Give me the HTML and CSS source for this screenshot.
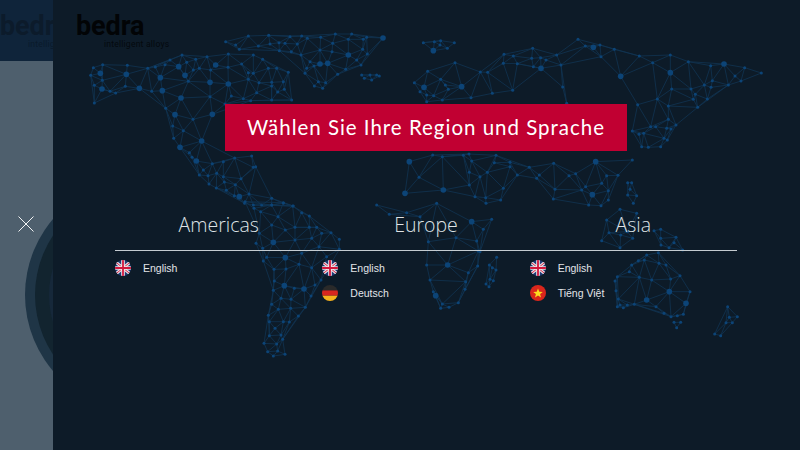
FILE: index.html
```html
<!DOCTYPE html>
<html lang="de">
<head>
<meta charset="utf-8">
<title>bedra</title>
<link rel="stylesheet" href="styles.css">
</head>
<body>
<div class="page">
  <aside class="side">
    <div class="side-top">
      <div class="logo logo-ghost"><span class="logo-name">bedra</span><span class="logo-tag">intelligent alloys</span></div>
    </div>
    <div class="side-body">
      <svg class="side-rings" width="53" height="389" viewBox="0 0 53 389">
        <circle cx="142" cy="234" r="117" fill="#1f3546"/>
        <circle cx="142" cy="234" r="107" fill="#12242f"/>
        <circle cx="142" cy="234" r="93" fill="#16283a"/>
      </svg>
      <button class="close" aria-label="Schließen">
        <svg width="16" height="16" viewBox="0 0 16 16"><path d="M.5.5l15 15M15.5.5l-15 15" stroke="#f2f4f5" stroke-width="1" fill="none"/></svg>
      </button>
    </div>
  </aside>
  <main class="main">
    <svg id="worldmap" class="worldmap" width="747" height="450" viewBox="53 0 747 450"></svg>
    <div class="logo"><span class="logo-name">bedra</span><span class="logo-tag">intelligent alloys</span></div>
    <h1 class="banner">Wählen Sie Ihre Region und Sprache</h1>
    <section class="regions">
      <div class="region-heads">
        <h2 class="region-head">Americas</h2>
        <h2 class="region-head">Europe</h2>
        <h2 class="region-head">Asia</h2>
      </div>
      <div class="region-lists">
        <ul class="langs">
          <li class="lang"><svg class="flag" viewBox="0 0 16 16"><use href="#uk"/></svg>English</li>
        </ul>
        <ul class="langs">
          <li class="lang"><svg class="flag" viewBox="0 0 16 16"><use href="#uk"/></svg>English</li>
          <li class="lang"><svg class="flag" viewBox="0 0 16 16"><use href="#de"/></svg>Deutsch</li>
        </ul>
        <ul class="langs">
          <li class="lang"><svg class="flag" viewBox="0 0 16 16"><use href="#uk"/></svg>English</li>
          <li class="lang"><svg class="flag" viewBox="0 0 16 16"><use href="#vn"/></svg>Tiếng Việt</li>
        </ul>
      </div>
    </section>
  </main>
</div>
<svg class="defs" width="0" height="0">
  <defs>
    <clipPath id="round"><circle cx="8" cy="8" r="8"/></clipPath>
    <g id="uk" clip-path="url(#round)">
      <rect width="16" height="16" fill="#1d3a75"/>
      <path d="M0 1.5L16 14.5M16 1.5L0 14.5" stroke="#e8dde2" stroke-width="3"/>
      <path d="M0 1.5L16 14.5M16 1.5L0 14.5" stroke="#d8304f" stroke-width="1"/>
      <path d="M8 0V16M0 8H16" stroke="#f0e8ea" stroke-width="3.600"/>
      <path d="M8 0V16M0 8H16" stroke="#d3163c" stroke-width="1.800"/>
    </g>
    <g id="de" clip-path="url(#round)">
      <rect width="16" height="5.4" fill="#2a2a2a"/>
      <rect y="5.4" width="16" height="5.3" fill="#d8261f"/>
      <rect y="10.7" width="16" height="5.3" fill="#f5b21c"/>
    </g>
    <g id="vn" clip-path="url(#round)">
      <rect width="16" height="16" fill="#d9261c"/>
      <path d="M8 3.4l1.3 3.3 3.5.2-2.7 2.2.9 3.4L8 10.600l-3 1.900.9-3.400-2.700-2.200 3.500-.2z" fill="#fcdc1f"/>
    </g>
  </defs>
</svg>
<script src="map.js"></script>
</body>
</html>
```
FILE: styles.css
```css
* { box-sizing: border-box; }
html, body { margin: 0; height: 100%; }
body { background: #0d1b28; overflow: hidden; font-family: "Liberation Sans", Arial, sans-serif; }
.page { display: flex; width: 800px; height: 450px; }
.side { width: 53px; flex: none; display: flex; flex-direction: column; overflow: hidden; }
.side-top { height: 61px; flex: none; background: #0f243a; padding: 14px 0 0 0; overflow: hidden; }
.side-body { position: relative; flex: 1; background: #4e5f6d; }
.side-rings { position: absolute; left: 0; top: 0; }
.close { position: absolute; left: 18px; top: 155px; width: 16px; height: 16px; padding: 0; border: 0; background: none; display: block; }
.close svg { display: block; }
.main { position: relative; flex: 1; display: flex; flex-direction: column; align-items: center; padding: 14px 1px 0 0; }
.worldmap { position: absolute; left: 0; top: 0; }
.logo { position: relative; align-self: flex-start; margin-left: 23px; width: 92px; height: 36px; color: #020406; }
.logo-ghost { margin-left: 0; width: 92px; color: #0c1b2b; }
.logo-name { display: block; font: 700 27px/24px "Roboto", sans-serif; letter-spacing: -.1px; }
.logo-tag { display: block; margin: 0 0 0 28px; font: 400 8.600px/12px "Roboto", sans-serif; letter-spacing: .2px; white-space: nowrap; color: #04090e; }
.logo-ghost .logo-tag { color: #0a1a2a; }
.banner { position: relative; width: 402px; height: 47px; margin: 54px 0 0; background: #c10032; color: #fff; font: 400 20.500px/46px "Lato", sans-serif; letter-spacing: .98px; text-align: center; white-space: nowrap; }
.regions { position: relative; width: 622px; margin-top: 51px; }
.region-heads { display: grid; grid-template-columns: repeat(3, 1fr); height: 49px; border-bottom: 1px solid #c4cbd0; }
.region-head { margin: 0; height: 48px; font: 300 19.500px/46px "Open Sans", sans-serif; color: #dfe3e6; text-align: center; }
.region-lists { display: grid; grid-template-columns: repeat(3, 1fr); padding-top: 4px; }
.langs { list-style: none; margin: 0; padding: 0; }
.lang { display: flex; align-items: center; gap: 12px; height: 25px; font-size: 10.500px; color: #e2e5e8; white-space: nowrap; }
.flag { width: 16px; height: 16px; flex: none; }
.defs { position: absolute; }
```
FILE: map.js
```js
var groups = [
  [80, 30, "40,113 68,104 61,130,b 32,136 67,151 43,166 66,177,b 90,184 107,189 43,219 142,106 139,133,b 136,169 178,175,b 203,115 241,143,b 215,184 247,182,b 226,111 255,104 270,90 306,75 296,110,b 320,97 315,136,b 347,88 381,80 407,105,b 445,72 340,120 358,115 392,120 444,112 485,102 520,75 548,88 505,128 390,157,b 445,162,b 325,154 303,204,b 390,200 454,198 490,206 257,235 285,254,b 339,268 397,253,b 278,288 310,302 281,325 365,333,b 300,352,b 328,368 336,382 349,393,b 397,401 430,395 370,420 358,435 384,437 410,430 430,440 387,462 433,456 466,464 483,446 409,474 439,481 478,500,b 507,492 463,497 494,520 435,222 530,188 537,158 575,157 610,155 575,168 593,186 613,178 575,210 635,210 512,212 565,115 590,115 625,127 505,148 520,130 464,384 515,378 520,412 527,410 545,525 575,505 610,520 640,528 575,525 520,525"],
  [80, 30, "437,35 505,18 566,16 630,20 665,18 766,12 815,12 860,22 909,24,b 467,45 478,58 535,48 570,42 597,38 615,40 652,42 682,25 722,22 758,40 805,28 850,28 848,58 862,72 805,75,b 720,60 690,95 720,102,b 743,100,b 756,65 663,75 598,62 634,65 680,115 675,130 773,133 797,118 843,105 830,90 702,108 703,168 737,158 715,155 728,175"],
  [80, 30, "853,145 870,135 890,135 898,138 875,150 845,135"],
  [230, 200, "45,5 72,25 125,15 160,8 188,18 92,35 215,38 238,48 144,50 125,75 195,82 238,82 260,82 303,98 166,90 88,100 130,127,b 195,120 245,115 275,100 78,130 98,145 328,118 267,140 328,148 215,160 110,172 166,173,b 100,183 207,193 132,208 168,207 245,203 290,170 133,243 273,240 163,257,b 222,267,b 193,265 255,255 130,271 243,288 153,295 183,298 125,313 226,322 145,328 182,325 205,348 115,346 160,365 178,366 118,365 135,385 118,407 153,405 158,418 102,430 140,432 113,455 143,453 165,463 130,468"],
  [400, 30, "70,38 103,35 122,32 163,38 100,62,b 120,45 142,55"],
  [400, 30, "165,98 83,124 43,158 72,172,b 122,148 136,165 185,170,b 241,126 263,127 145,178 60,185 80,195 101,197 80,215 127,210 213,203 277,190 338,181 488,171 312,73 340,78 398,55 310,100 352,101 395,85 422,83 438,90 400,110 423,115,b 483,105 470,75 534,28 556,48 580,52,b 600,45 603,80 643,58 718,78 758,98 811,75 811,128,b 865,95 662,139,b 932,107 972,102,b 1034,113 1084,129 1005,138 1023,153 985,165 937,152 913,165 933,172 873,177 815,177 772,207 713,224 805,228 886,193 880,208 922,207 893,232 800,295 813,297 828,285 805,268 752,290 767,290 697,303 717,313 731,310 725,350 745,352 782,350 792,325 802,330 500,220"],
  [400, 30, "28,395,b 98,375 127,380 57,442 130,480,b 15,490,b 190,376 207,372 215,393 283,398 288,376 330,397 330,410 388,412 461,400 587,395,b 697,390 527,431 507,437 418,435 410,445 465,478 460,507 557,470 545,480 577,494,b 625,482 625,510 603,527 566,525 240,440 262,427 352,435 310,475 208,427 208,465 257,503 302,510 225,500 258,520 620,437 654,436 605,460"],
  [400, 30, "683,458 695,458 690,478 683,495 710,497 700,520"],
  [230, 200, "440,15 478,43 530,38 570,50 620,10 595,125 678,113 725,65,b 760,88 785,58 745,153 740,123 590,195 653,195,b 743,198 750,155 715,218 707,245 705,268 600,240 610,275 617,287,b 685,308 657,322 632,325 637,312"],
  [230, 200, "800,172 778,195 787,203 798,210 780,238 768,252 790,242 777,260"],
  [600, 200, "20,60 60,28 110,40 5,122 60,143 27,98 62,105 98,115 82,95"],
  [600, 200, "162,92 182,88 182,115 228,112 222,128 248,150 207,143 183,135"],
  [600, 200, "140,165 175,158 133,180 177,190 115,182 198,195 95,195 88,215 118,232 155,240 52,230 45,243 48,272 55,297 60,315 70,323 52,320 82,315 103,313 140,300,b 208,275,b 270,275 240,227 212,237 258,310,b 168,320 192,340 232,347 250,343 213,350"],
  [600, 200, "222,367 242,367 230,383"],
  [600, 200, "383,320 388,352 412,350 378,368 397,368 344,402 362,407"]
];
var NS = "http://www.w3.org/2000/svg";
var svg = document.getElementById("worldmap");
function el(name, attrs) {
  var e = document.createElementNS(NS, name);
  for (var k in attrs) e.setAttribute(k, attrs[k]);
  svg.appendChild(e);
}
function side(a, b, c) {
  return (b.x - a.x) * (c.y - a.y) - (b.y - a.y) * (c.x - a.x);
}
function crosses(a, b, c, d) {
  if (a === c || a === d || b === c || b === d) return false;
  return side(a, b, c) * side(a, b, d) < 0 && side(c, d, a) * side(c, d, b) < 0;
}
groups.forEach(function (g) {
  var pts = g[2].split(" ").map(function (s) {
    var p = s.split(",");
    return { x: g[0] + p[0] / 3, y: g[1] + p[1] / 3, big: p[2] === "b" };
  });
  var pairs = [];
  pts.forEach(function (a, i) {
    pts.forEach(function (b, j) {
      if (j > i) pairs.push({ a: a, b: b, d: Math.hypot(a.x - b.x, a.y - b.y) });
    });
  });
  pairs.sort(function (p, q) { return p.d - q.d; });
  var kept = [];
  pairs.forEach(function (p) {
    if (p.d > 42) return;
    if (kept.some(function (k) { return crosses(p.a, p.b, k.a, k.b); })) return;
    kept.push(p);
    el("line", { x1: p.a.x, y1: p.a.y, x2: p.b.x, y2: p.b.y, stroke: "#103452", "stroke-width": ".8" });
  });
  pts.forEach(function (a) {
    el("circle", { cx: a.x, cy: a.y, r: a.big ? 2.8 : 1.5, fill: "#0c4477" });
  });
});
```
